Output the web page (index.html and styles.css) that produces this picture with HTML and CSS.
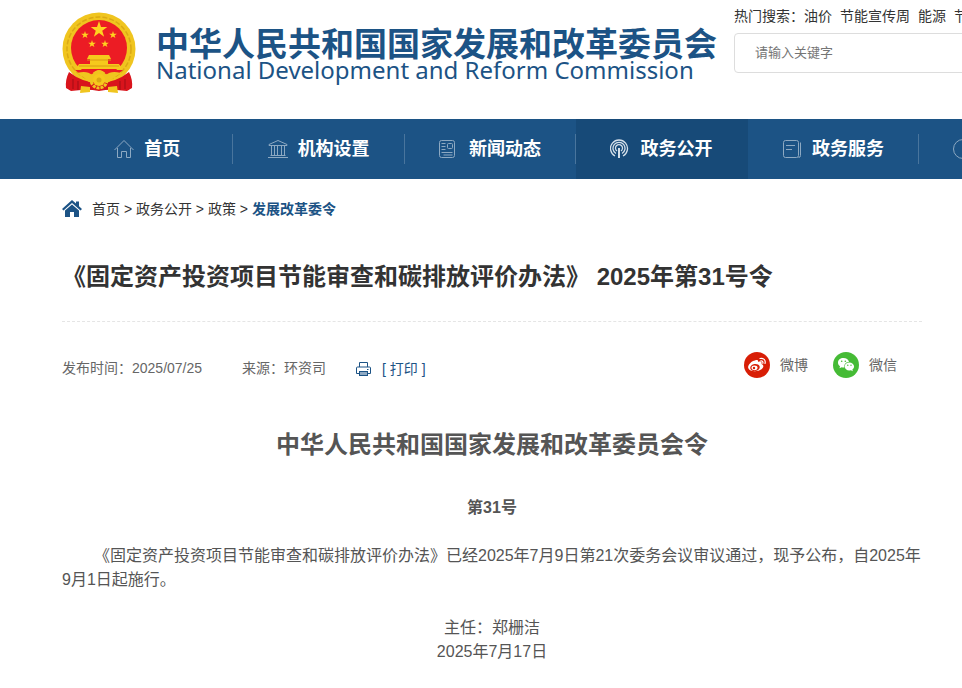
FILE: index.html
```html
<!DOCTYPE html>
<html lang="zh-CN">
<head>
<meta charset="utf-8">
<title>《固定资产投资项目节能审查和碳排放评价办法》</title>
<link rel="stylesheet" href="styles.css">
</head>
<body>
<header class="site-header">
  <div class="brand">
    <svg class="emblem" viewBox="0 0 76 84" aria-hidden="true">
      <circle cx="38" cy="37" r="36.500" fill="#f0c51f"/>
      <circle cx="38" cy="37" r="32" fill="none" stroke="#dba914" stroke-width="1.500" stroke-dasharray="5 2"/>
      <path d="M8 60 Q4 68 5 76 L10 79 20 78 Q28 77 38 79 Q48 77 56 78 L66 79 71 76 Q72 68 68 60 Q54 71 38 71 Q22 71 8 60Z" fill="#d9141c"/>
      <path d="M12 67v10M17 69v9M59 69v9M64 67v10" stroke="#a90f16" stroke-width="1.200"/>
      <circle cx="38" cy="36" r="28" fill="#ec1c24"/>
      <path d="M38 10l1.600 4.700h5l-4 3 1.500 4.800-4.100-2.900-4.100 2.900 1.500-4.800-4-3h5z" transform="translate(-9.500 -3.500) scale(1.250)" fill="#ffd21f"/>
      <g fill="#ffd21f">
        <path id="star" d="M24 19l.9 2.700h2.900l-2.300 1.700.9 2.700-2.400-1.700-2.400 1.700.9-2.700-2.300-1.700h2.900z"/>
        <use href="#star" x="28"/>
        <use href="#star" x="7" y="9"/>
        <use href="#star" x="20" y="9"/>
      </g>
      <path d="M28 43h20l2 4H26zM29 47h18v5H29zM18 52h40l3 5H15z" fill="#f6c91c"/>
      <path d="M26 48h24M18 54h40" stroke="#d99a10" stroke-width="1"/>
      <path d="M14 58h48l-5 4H19z" fill="#ec1c24"/>
      <path d="M16 61Q26 58 31 63Q34 58 38 58Q42 58 45 63Q50 58 60 61Q54 64 48 70L28 70Q22 64 16 61Z" fill="#f0c51f"/>
      <circle cx="38" cy="68" r="8" fill="none" stroke="#f0c51f" stroke-width="3" stroke-dasharray="3 1"/>
      <circle cx="38" cy="68" r="6" fill="#f6c91c"/>
      <circle cx="38" cy="68" r="2.500" fill="#dba914"/>
      <path d="M20 74l9 1v5l-10 1zM56 74l-9 1v5l10 1z" fill="#f0c51f"/>
    </svg>
    <div class="brand-text">
      <div class="brand-cn">中华人民共和国国家发展和改革委员会</div>
      <div class="brand-en">National Development and Reform Commission</div>
    </div>
  </div>
  <form class="search">
    <div class="hot"><label for="q">热门搜索：</label><a href="#">油价</a><a href="#">节能宣传周</a><a href="#">能源</a><a href="#">节能</a></div>
    <input id="q" type="text" placeholder="请输入关键字">
  </form>
</header>

<nav class="main-nav">
  <a href="#"><svg viewBox="0 0 20 20" aria-hidden="true"><path d="M.500 11L10 1.500 19.500 11M3.500 9v9.500h4v-6h5v6h4V9"/></svg>首页</a>
  <a href="#"><svg viewBox="0 0 20 20" aria-hidden="true"><path d="M1 6.500v-1L10 1.500l9 4v1zM0 18.500h20M2.500 16.500h15M3.500 7v9M6.500 7v9M9.500 7v9M13.500 7v9M16.500 7v9"/></svg>机构设置</a>
  <a href="#"><svg viewBox="0 0 20 20" aria-hidden="true"><rect x=".500" y="1.500" width="15" height="17" rx="2"/><path d="M2.500 4.500h4M2.500 7.500h4M2.500 10.500h4M2.500 13.500h11M4.500 16h9"/><rect x="8.500" y="4.500" width="5" height="5" rx="1"/></svg>新闻动态</a>
  <a href="#" class="active"><svg viewBox="0 0 20 20" aria-hidden="true"><path d="M5 17A8.500 8.500 0 1 1 13 17M6 14.500A6 6 0 1 1 12 14.500M7 12A3.500 3.500 0 1 1 11 12"/><path class="mast" d="M9 9v10"/></svg>政务公开</a>
  <a href="#"><svg viewBox="0 0 20 20" aria-hidden="true"><rect x="1.500" y="1.500" width="15" height="17" rx="2"/><path d="M4 6.500h9M4 10.500h6M18.500 3.500v13q0 2-2 2"/></svg>政务服务</a>
  <a href="#"><svg viewBox="0 0 20 20" aria-hidden="true"><circle cx="10" cy="10" r="9.500"/></svg>互动交流</a>
</nav>

<main class="page">
  <nav class="crumbs">
    <svg viewBox="0 0 20 18" aria-hidden="true"><path d="M10 0L0 9l1.500 1.500L10 3l8.500 7.500L20 9l-3-2.700V1.500h-3v2z"/><path d="M10 4.500L3 10.600V17h5v-5h4v5h5v-6.400z"/></svg>
    <span><a href="#">首页</a> &gt; <a href="#">政务公开</a> &gt; <a href="#">政策</a> &gt; <a href="#" class="current">发展改革委令</a></span>
  </nav>

  <h1>《固定资产投资项目节能审查和碳排放评价办法》 2025年第31号令</h1>

  <div class="meta">
    <span>发布时间：2025/07/25</span>
    <span>来源：环资司</span>
    <button type="button" class="print"><svg viewBox="0 0 16 16" aria-hidden="true"><path d="M3.500 6V1.500h8V6M3.500 12.500h-3V7q0-1 1-1h12q1 0 1 1v5.500h-3"/><rect x="3.500" y="10.500" width="8" height="4" fill="#8fa9c2"/><path d="M11 8.500h1.500"/></svg>[ 打印 ]</button>
    <div class="share">
      <a href="#"><svg viewBox="0 0 26 26" aria-hidden="true"><circle cx="13" cy="13" r="13" fill="#d81e06"/><path d="M11 8.500c2-1 3.500-.5 3 1.500 2.500-1 4.500 0 3.500 2 2.500.8 2.500 3.500 0 5.300-4 3-12 2.500-13.300-1.300C3.500 13 8 8.500 11 8.500z" fill="#fff"/><ellipse cx="11" cy="15.500" rx="4.800" ry="3.500" transform="rotate(-8 11 15.500)" fill="#d81e06"/><ellipse cx="10.500" cy="15.800" rx="3" ry="2.400" fill="#fff"/><circle cx="10" cy="16" r="1.200" fill="#d81e06"/><path d="M16 6.500c3.500-1 6 1.800 5 5M16.500 9c1.800-.4 2.800.8 2.300 2.300" fill="none" stroke="#fff" stroke-width="1.200" stroke-linecap="round"/></svg>微博</a>
      <a href="#"><svg viewBox="0 0 26 26" aria-hidden="true"><circle cx="13" cy="13" r="13" fill="#45bb35"/><path d="M10.500 6c-3.300 0-5.500 2-5.500 4.700 0 1.500.8 2.700 2 3.600l-.5 2 2.200-1.100c.8.200 1.600.300 2.500.2C11 12 13 10 16 10c-.5-2.400-2.800-4-5.500-4z" fill="#fff"/><path d="M16.300 10.600c-2.800 0-4.700 1.700-4.700 4s2.200 4 4.700 4l1.700-.3 1.800 1-.4-1.700c1-.8 1.700-1.800 1.700-3 0-2.300-2.200-4-4.800-4z" fill="#fff"/><g fill="#45bb35"><circle cx="8.700" cy="9.300" r=".8"/><circle cx="12.300" cy="9.300" r=".8"/><circle cx="14.800" cy="13.300" r=".7"/><circle cx="18" cy="13.300" r=".7"/></g></svg>微信</a>
    </div>
  </div>

  <article class="article">
    <h2>中华人民共和国国家发展和改革委员会令</h2>
    <h3>第31号</h3>
    <p class="body">《固定资产投资项目节能审查和碳排放评价办法》已经2025年7月9日第21次委务会议审议通过，现予公布，自2025年9月1日起施行。</p>
    <p class="sign">主任：郑栅洁<br>2025年7月17日</p>
  </article>
</main>
</body>
</html>
```

FILE: styles.css
```css
* { box-sizing: border-box; }

body {
  margin: 0;
  overflow-x: hidden;
  background: #fff;
  color: #333;
  font: 14px/20px "Liberation Sans", "Noto Sans CJK SC", sans-serif;
}

a { color: inherit; text-decoration: none; }

h1, h2, h3, p { margin: 0; }

/* header */
.site-header {
  display: flex;
  height: 119px;
  padding-left: 61px;
  overflow: hidden;
}

.brand {
  display: flex;
  flex: none;
  width: 673px;
  padding-top: 12px;
}

.emblem { width: 76px; height: 84px; flex: none; }

.brand-text {
  padding: 14px 0 0 19px;
  color: #1c5385;
  white-space: nowrap;
}

.brand-cn {
  font: bold 33px/33px "Noto Sans CJK SC", sans-serif;
}

.brand-en {
  font: 24px/22px "Noto Sans", sans-serif;
}

.search { flex: none; width: 466px; padding-top: 6px; }

.hot { display: flex; gap: 8px; white-space: nowrap; }
.hot label { margin-right: -8px; }

.search input {
  display: block;
  width: 100%;
  height: 40px;
  margin-top: 7px;
  padding: 0 20px 2px;
  border: 1px solid #ddd;
  border-radius: 4px;
  font: 13px/20px "Liberation Sans", "Noto Sans CJK SC", sans-serif;
}
.search input::placeholder { color: #757575; }

/* main navigation */
.main-nav {
  display: flex;
  height: 60px;
  padding-left: 62px;
  overflow: hidden;
  background: #1c5385;
  color: #fff;
  font-size: 18px;
  font-weight: bold;
}

.main-nav a {
  position: relative;
  display: flex;
  flex: 0 0 calc(1200px / 7);
  align-items: center;
  justify-content: center;
  gap: 10px;
  padding-right: 1px;
  white-space: nowrap;
}

.main-nav a::after {
  content: "";
  position: absolute;
  top: 15px;
  right: 0;
  width: 1px;
  height: 30px;
  background: #49759d;
}

.main-nav .active { background: #174a78; }
.main-nav .active::after { display: none; }

.main-nav svg {
  width: 20px;
  height: 20px;
  fill: none;
  stroke: #8da9c2;
  stroke-width: 1;
}
.main-nav .active svg { stroke: #d5e0ea; stroke-width: 1.3; }
.main-nav .mast { stroke-width: 2; }

/* page content */
.page { margin: 0 40px 0 62px; }

.crumbs {
  display: flex;
  align-items: center;
  gap: 10px;
  height: 60px;
}
.crumbs svg { width: 20px; height: 18px; fill: #1c5385; }
.crumbs .current { color: #1c5385; font-weight: bold; }

h1 {
  padding: 20px 0 26px;
  border-bottom: 1px dashed #e5e5e5;
  font-size: 24px;
  line-height: 36px;
}

.meta {
  display: flex;
  align-items: center;
  gap: 40px;
  height: 92px;
  color: #666;
}

.print {
  display: flex;
  align-items: center;
  gap: 10px;
  margin-left: -10px;
  padding: 2px 0 0;
  border: 0;
  background: none;
  color: #1c5385;
  font: inherit;
}
.print svg {
  width: 16px;
  height: 16px;
  fill: none;
  stroke: #1c5385;
}

.share {
  display: flex;
  gap: 25px;
  margin-left: auto;
  padding: 0 25px 6px 0;
}
.share a { display: flex; align-items: center; gap: 10px; }
.share svg { width: 26px; height: 26px; }

.article {
  color: #555;
  font-size: 16px;
  line-height: 24px;
}
.article h2 {
  padding-top: 13px;
  font-size: 24px;
  line-height: 36px;
  text-align: center;
}
.article h3 {
  margin: 33px 0 24px;
  font-size: 16px;
  text-align: center;
}
.body { text-indent: 2em; }
.sign { margin-top: 24px; text-align: center; }
```
